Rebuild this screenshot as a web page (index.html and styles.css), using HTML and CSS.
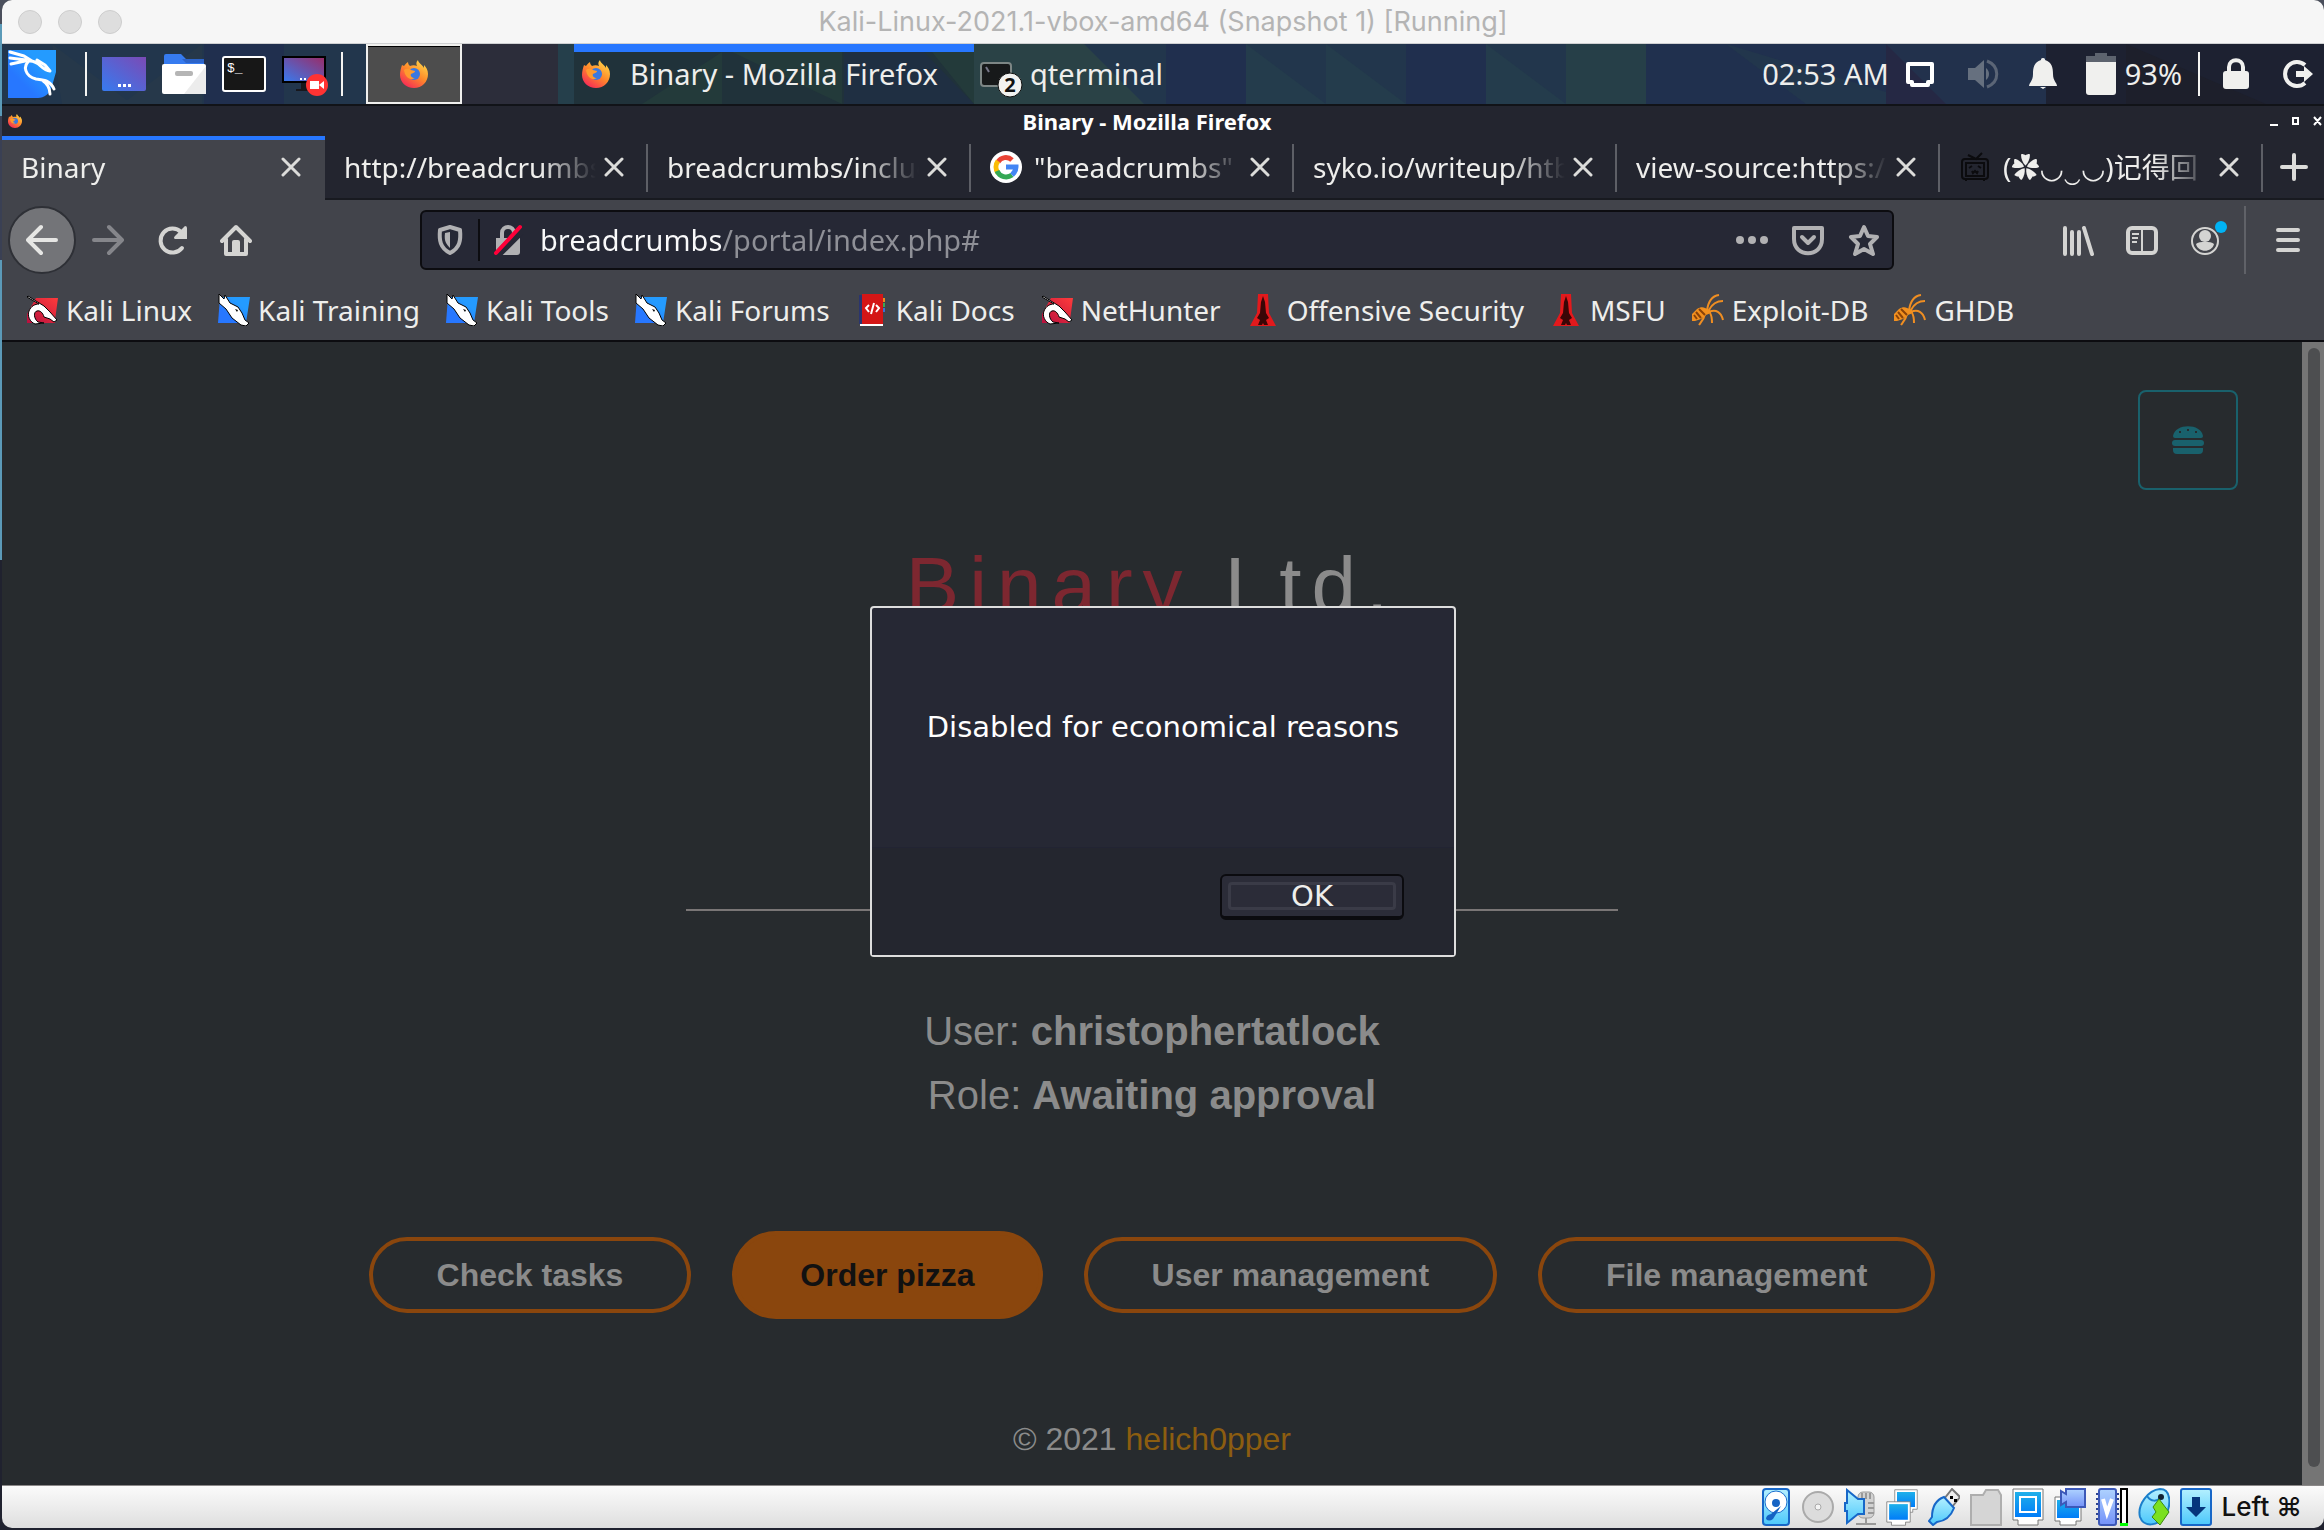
FILE: index.html
```html
<!DOCTYPE html>
<html lang="en">
<head>
<meta charset="utf-8">
<title>Binary - Mozilla Firefox</title>
<link rel="stylesheet" href="styles.css">
</head>
<body>
<svg class="defs" aria-hidden="true">
  <defs>
    <linearGradient id="kaliBlue" x1="0" y1="1" x2="1" y2="0"><stop offset=".3" stop-color="#2777ff"/><stop offset=".7" stop-color="#249bff"/></linearGradient>
    <linearGradient id="kaliRed" x1="0" y1="1" x2="1" y2="0"><stop offset="0" stop-color="#b8103f"/><stop offset="1" stop-color="#ff3b3b"/></linearGradient>
    <linearGradient id="desk" x1="0" y1="1" x2="1" y2="0"><stop offset="0" stop-color="#367bf0"/><stop offset="1" stop-color="#7b4ab5"/></linearGradient>
    <linearGradient id="rec" x1="0" y1="1" x2="1" y2="0"><stop offset="0" stop-color="#367bf0"/><stop offset="1" stop-color="#9c2b66"/></linearGradient>
    <linearGradient id="fox" x1=".9" y1="0" x2=".2" y2="1"><stop offset="0" stop-color="#ffe14d"/><stop offset=".5" stop-color="#ff8a2a"/><stop offset="1" stop-color="#f5235a"/></linearGradient>
    <linearGradient id="sky" x1="0" y1="0" x2="0" y2="1"><stop offset="0" stop-color="#b4f0ff"/><stop offset="1" stop-color="#4cc8fb"/></linearGradient>
    <linearGradient id="azure" x1="0" y1="0" x2="0" y2="1"><stop offset="0" stop-color="#1fb0ea"/><stop offset="1" stop-color="#007cf8"/></linearGradient>
    <linearGradient id="lilac" x1="0" y1="0" x2="0" y2="1"><stop offset="0" stop-color="#aed2ff"/><stop offset="1" stop-color="#7391f8"/></linearGradient>
  </defs>
  <symbol id="firefox" viewBox="0 0 28 28">
    <path fill="url(#fox)" d="M18 0c-2 2-2 4-1 6-2-1-5-1-7 0C9 5 8 4 8 2 6 3 5 5 4 6L2 5C1 8 0 11 0 15c0 7 6 13 14 13s14-6 14-14c0-4-2-7-4-9v3c-1-3-6-5-6-8z"/>
    <circle cx="14" cy="14" r="6" fill="#3a78e0"/>
    <path fill="#ff9a2e" d="M4 10c3-2 6-1 7 0l4 1c0 2-3 2-4 3-1 2 1 4 4 4-4 3-10 0-11-8z"/>
  </symbol>
  <symbol id="kali-red" viewBox="0 0 32 32">
    <path fill="url(#kaliRed)" d="M10 4h22l-3 22 0 3H1V20z"/>
    <path fill="#fff" stroke="#000" d="M2 2l16 10 6 6 7 8-3 2-4-3-6-2c-1-4-4-7-7-6-4 1-3 8 1 11l6 1-9 1C4 28 1 22 3 17c2-5 6-7 10-7L1 3z"/>
  </symbol>
  <symbol id="kali-dragon" viewBox="0 0 32 32">
    <path fill="url(#kaliBlue)" d="M2 3h30l-4 26H0z"/>
    <path fill="#fff" stroke="#000" d="M1 0l5 5 1-4 5 8 8 4 4 6 3 7 4 3-3 3-5-1-9-7-6-9-7-6z"/>
    <path fill="#000" d="M17 15l3 1-1 2z"/>
  </symbol>
  <symbol id="docs" viewBox="0 0 32 32">
    <path fill="#2a356e" d="M3 1h4v29H3z"/><path fill="#f08a1d" d="M26 4h3v4h-3z"/><path fill="#3aa856" d="M26 9h3v4h-3z"/><path fill="#3b6fd8" d="M26 14h3v4h-3z"/>
    <path fill="#d41616" d="M6 0h21v30H6z"/><path fill="#fff" d="M4 30h23v2H4z"/>
    <path fill="none" stroke="#fff" stroke-width="2" d="M13 11l-3 3 3 4M20 11l3 3-3 4M18 9l-3 11"/>
  </symbol>
  <symbol id="offsec" viewBox="0 0 32 32">
    <path fill="#e3191c" d="M11 0h10l1 19 7 13H3l7-13z"/>
    <path fill="#3a0606" d="M16 2l2 6 1 11 3 5-3 2 2 5h-4l-1-2-1 2h-4l2-5-3-2 3-5 1-11z"/>
  </symbol>
  <symbol id="ant" viewBox="0 0 32 32">
    <path fill="none" stroke="#ef8e22" stroke-width="2" d="M15 17c1-9 4-15 12-16M17 16c3-6 7-9 14-9M17 18c7-3 12 0 14 8M18 19c2 3 2 6 2 10M13 20c-1 5-3 7-6 11"/>
    <path fill="#f2901f" d="M0 27V20l5-5c3-2 6-2 8-1l5 2 1 3-5 2-5 4-6 2z"/>
    <path stroke="#8a4208" stroke-width="2" d="M4 18l5 6M7 15l6 6M2 21l3 4"/>
  </symbol>
  <symbol id="close" viewBox="0 0 20 20"><path stroke="currentColor" stroke-width="3" stroke-linecap="round" d="M2 2l16 16M18 2L2 18"/></symbol>
  <symbol id="screen" viewBox="0 0 32 32">
    <path fill="#fff" stroke="#777" d="M1 1h30v26h-6v4H7v-4H1z"/><path fill="url(#azure)" d="M4 4h24v20H4z"/>
  </symbol>
</svg>

<div class="window">
  <header class="mac-bar">
    <div class="lights"><i></i><i></i><i></i></div>
    <span class="mac-title">Kali-Linux-2021.1-vbox-amd64 (Snapshot 1) [Running]</span>
  </header>

  <div class="panel">
    <svg class="panel-art" viewBox="0 0 2322 60" preserveAspectRatio="none" aria-hidden="true">
      <path fill="#22364c" d="M0 0h2322v60H0z"/>
      <path fill="#26384a" d="M50 0l80 60H60zM120 60l80-60v60z"/>
      <path fill="#202f4e" d="M202 0h80v60h-80zM1164 0h80v60h-80zM1404 0h80v60h-80z"/>
      <path fill="#253f4b" d="M556 0h16v60h-16z"/>
      <path fill="#20323a" d="M572 8h400v52H572z"/>
      <path fill="#233a3a" d="M640 60l80-52v52zM730 8h110v52zM930 8h42v52z"/>
      <path fill="#1f2f42" d="M842 8h80l50 52H842z"/>
      <path fill="#2a4246" d="M972 0h110l60 60H972z"/>
      <path fill="#243c4c" d="M1244 0l80 60h-80zM1324 0l80 60h-80zM1484 0l80 60h-80z"/>
      <path fill="#263f48" d="M1564 0h80v60h-80z"/>
      <path fill="#20304e" d="M1644 0h80l80 60h-160zM1724 0h200v60z"/>
      <path fill="#22314c" d="M1884 0h160v60h-160z"/><path fill="#252844" d="M1884 0l60 60h-60z"/>
      <path fill="#1d2131" d="M2044 0h278v60h-278z"/><path fill="#1d1f2b" d="M2124 0l140 60h-140z"/>
    </svg>
    <button class="icon-btn kali-menu" aria-label="Applications"><svg viewBox="0 0 48 48" width="48" height="48"><path fill="url(#kaliBlue)" d="M0 0h48v22l-4 14c-2 8-8 12-14 12H0z"/><g fill="none" stroke="#fff" stroke-width="3" stroke-linecap="round" stroke-linejoin="round"><path d="M2 2l14 4 8 5M2 8l16 2M3 14l14-3M22 10c-8 6-5 16 6 19 8 1 14 1 18 10M34 30c6 4 8 8 8 14M22 11c10 0 11 9 20 10l-5-6-8-5"/></g></svg></button>
    <i class="rule"></i>
    <button class="icon-btn" aria-label="Show desktop"><svg viewBox="0 0 44 44" width="44" height="44"><path fill="url(#desk)" d="M0 5h44v32q0 2-2 2H2q-2 0-2-2z"/><path fill="#fff" d="M16 32h3v3h-3zM21 32h3v3h-3zM26 32h3v3h-3z"/></svg></button>
    <button class="icon-btn" aria-label="Files"><svg viewBox="0 0 44 44" width="44" height="44"><path fill="#367bf0" d="M2 13V4q0-2 2-2h15l5 5h18v8H2z"/><path fill="#2c63c8" d="M20 7h22v4H24z"/><rect y="12" width="44" height="30" rx="2" fill="#fff"/><path fill="#ececec" d="M44 14v28H22z"/><rect x="13" y="19" width="18" height="5" rx="2" fill="#b5b5b5"/></svg></button>
    <button class="icon-btn" aria-label="Terminal"><svg viewBox="0 0 44 44" width="44" height="44"><rect x="1" y="5" width="42" height="34" rx="2" fill="#171717" stroke="#fff" stroke-width="2"/><text x="5" y="20" class="prompt">$_</text></svg></button>
    <button class="icon-btn" aria-label="Screen recorder"><svg viewBox="0 0 46 46" width="46" height="46"><rect x="1" y="6" width="42" height="25" fill="url(#rec)" stroke="#000" stroke-width="2"/><path fill="#17171c" d="M19 32h8v6h6v2H14v-2h5z"/><path fill="#fff" d="M18 27h2v2h-2zM22 27h2v2h-2z"/><circle cx="35" cy="34" r="11" fill="#f33"/><path fill="#fff" d="M28 30h9v8h-9zM37 34l5-4v8z"/></svg></button>
    <i class="rule rule-2"></i>
    <div class="workspaces"><button class="ws ws-on" aria-label="Workspace 1"><svg width="28" height="28"><use href="#firefox"/></svg></button><button class="ws" aria-label="Workspace 2"></button></div>
    <button class="task task-on"><svg width="28" height="28"><use href="#firefox"/></svg><span>Binary - Mozilla Firefox</span></button>
    <button class="task"><svg viewBox="0 0 44 48" width="44" height="48"><rect x="1" y="13" width="30" height="23" rx="3" fill="#17191a" stroke="#7d8685" stroke-width="2"/><path stroke="#778" stroke-width="2" d="M6 17l3 5"/><circle cx="30" cy="35" r="12" fill="#f2f2f0" stroke="#111"/><text x="30" y="42" text-anchor="middle" class="badge">2</text></svg><span>qterminal</span></button>
    <div class="tray">
      <span class="clock">02:53 AM</span>
      <svg class="display" viewBox="0 0 32 32" width="32" height="32"><path fill="none" stroke="#fff" stroke-width="4" stroke-linejoin="round" d="M4 6h24v18h-4v3H8v-3H4z"/></svg>
      <svg viewBox="0 0 32 32" width="32" height="32"><path fill="#66707f" d="M1 10h7l9-8v28l-9-8H1zM19 10c4 3 4 9 0 12z"/><path fill="none" stroke="#5b6576" stroke-width="3" d="M20 3c13 5 13 21 0 26"/></svg>
      <svg viewBox="0 0 32 32" width="32" height="32"><path fill="#f0f0ee" d="M16 0c2 0 2 1 2 2 7 2 8 8 8 14 0 7 4 9 4 12H2c0-3 4-5 4-12 0-6 1-12 8-14 0-1 0-2 2-2zM13 29h6l-3 2z"/></svg>
      <span class="power"><svg viewBox="0 0 32 44" width="32" height="44"><path fill="#5d636e" d="M10 1h12v3h9v8H1V4h9z"/><path fill="#f0f0ee" d="M1 10h30v30q0 3-3 3H4q-3 0-3-3z"/></svg>93%</span>
      <i class="rule"></i>
      <svg viewBox="0 0 32 32" width="32" height="32"><rect x="3" y="13" width="26" height="18" rx="3" fill="#f0f0ee"/><path fill="none" stroke="#f0f0ee" stroke-width="4" d="M9 15V9c0-9 14-9 14 0v6"/></svg>
      <svg viewBox="0 0 32 32" width="32" height="32"><path fill="none" stroke="#f0f0ee" stroke-width="4" d="M23 7A12 12 0 1 0 23 25"/><path fill="#f0f0ee" d="M14 13h8V8l9 8-9 8v-5h-8z"/></svg>
    </div>
  </div>

  <div class="titlebar">
    <svg class="title-fox" width="14" height="14"><use href="#firefox"/></svg>
    <span class="title-text">Binary - Mozilla Firefox</span>
    <svg class="win-ctl" viewBox="0 0 56 14" width="56" height="14"><path stroke="#fff" stroke-width="2" fill="none" d="M2 11h8M25 4h5v6h-5zM46 3l7 8M53 3l-7 8"/></svg>
  </div>

  <nav class="tabs" aria-label="Tabs">
    <div class="tab tab-on"><span class="label">Binary</span><button class="x" aria-label="Close tab"><svg width="20" height="20"><use href="#close"/></svg></button></div>
    <div class="tab"><span class="label">http://breadcrumbs</span><button class="x" aria-label="Close tab"><svg width="20" height="20"><use href="#close"/></svg></button></div>
    <div class="tab"><span class="label">breadcrumbs/includes</span><button class="x" aria-label="Close tab"><svg width="20" height="20"><use href="#close"/></svg></button></div>
    <div class="tab"><svg class="fav" viewBox="0 0 32 32" width="32" height="32"><circle cx="16" cy="16" r="16" fill="#fff"/><g fill="none" stroke-width="5"><path stroke="#ea4335" d="M8 11A9 9 0 0 1 22 9"/><path stroke="#fbbc05" d="M8 10a10 10 0 0 0 0 12"/><path stroke="#34a853" d="M7 20a10 10 0 0 0 15 4"/><path stroke="#4285f4" d="M16 16h10c0 4-2 6-4 8"/></g></svg><span class="label">"breadcrumbs"</span><button class="x" aria-label="Close tab"><svg width="20" height="20"><use href="#close"/></svg></button></div>
    <div class="tab"><span class="label">syko.io/writeup/htb</span><button class="x" aria-label="Close tab"><svg width="20" height="20"><use href="#close"/></svg></button></div>
    <div class="tab"><span class="label">view-source:https:/</span><button class="x" aria-label="Close tab"><svg width="20" height="20"><use href="#close"/></svg></button></div>
    <div class="tab"><svg class="fav" viewBox="0 0 32 32" width="32" height="32"><g fill="none" stroke="#0b0b0e" stroke-width="2"><path d="M9 4l8 4 6-6"/><rect x="3" y="8" width="26" height="20" rx="3"/><rect x="7" y="12" width="18" height="13"/><path d="M10 17l3-2M22 17l-3-2M13 20l1 2 2-2 2 2 1-2M7 28v2M25 28v2"/></g></svg><span class="label">(✿◡‿◡)记得回</span><button class="x" aria-label="Close tab"><svg width="20" height="20"><use href="#close"/></svg></button></div>
    <button class="new-tab" aria-label="New tab"><svg viewBox="0 0 28 28" width="28" height="28"><path stroke="currentColor" stroke-width="4" stroke-linecap="round" d="M14 2v24M2 14h24"/></svg></button>
  </nav>

  <div class="toolbar">
    <div class="nav-left">
      <button class="back" aria-label="Back"><svg viewBox="0 0 32 32" width="32" height="32"><path class="ln" d="M30 16H3M15 3L2 16l13 13"/></svg></button>
      <button class="icon-btn dim" aria-label="Forward"><svg viewBox="0 0 32 32" width="32" height="32"><path class="ln" d="M2 16h27M17 3l13 13-13 13"/></svg></button>
      <button class="icon-btn" aria-label="Reload"><svg viewBox="0 0 32 32" width="32" height="32"><path class="ln" d="M26 24A12 12 0 1 1 25 8"/><path fill="currentColor" d="M29 2q2 0 2 2v11H19q-2-1 0-3z"/></svg></button>
      <button class="icon-btn" aria-label="Home"><svg viewBox="0 0 32 32" width="32" height="32"><path class="ln" d="M2 17L16 3l14 14M6 15v15h20V15"/><path fill="currentColor" d="M12 30V18q0-2 2-2h4q2 0 2 2v12z"/></svg></button>
    </div>
    <form class="urlbar">
      <svg viewBox="0 0 32 32" width="32" height="32"><path fill="none" stroke="#b1b1b3" stroke-width="4" stroke-linejoin="round" d="M16 3l10 3c1 10 0 18-10 23C6 24 5 16 6 6z"/><path fill="#b1b1b3" d="M16 8v16c-4-4-6-7-5-15z"/></svg>
      <i class="url-rule"></i>
      <svg viewBox="0 0 32 32" width="32" height="32"><path fill="#b1b1b3" d="M4 14h24v14q0 3-3 3H7q-3 0-3-3z"/><path fill="none" stroke="#b1b1b3" stroke-width="4" d="M10 15V9c0-8 12-8 12 0v6"/><path stroke="#262835" stroke-width="8" d="M5 31L31 5"/><path stroke="#ff0039" stroke-width="4" stroke-linecap="round" d="M4 29L28 3"/></svg>
      <input class="url" type="text" aria-label="Address" value="breadcrumbs/portal/index.php#">
      <svg viewBox="0 0 32 32" width="32" height="32" fill="#b1b1b3"><circle cx="4" cy="16" r="4"/><circle cx="16" cy="16" r="4"/><circle cx="28" cy="16" r="4"/></svg>
      <svg viewBox="0 0 32 32" width="32" height="32"><path fill="none" stroke="#b1b1b3" stroke-width="4" stroke-linejoin="round" d="M2 4h28v11c0 19-28 19-28 0z"/><path fill="none" stroke="#b1b1b3" stroke-width="4" stroke-linecap="round" stroke-linejoin="round" d="M10 13l6 6 6-6"/></svg>
      <svg viewBox="0 0 32 32" width="32" height="32"><path fill="none" stroke="#b1b1b3" stroke-width="4" stroke-linejoin="round" d="M16 3l4 9 9 1-7 7 3 10-9-5-9 5 3-10-7-7 9-1z"/></svg>
    </form>
    <div class="nav-right">
      <button class="icon-btn" aria-label="Library"><svg viewBox="0 0 32 32" width="32" height="32"><path class="ln" d="M3 4v26M10 8v22M17 8v22M22 4l8 26"/></svg></button>
      <button class="icon-btn" aria-label="Sidebar"><svg viewBox="0 0 32 32" width="32" height="32"><rect class="ln" x="2" y="4" width="28" height="25" rx="4"/><path fill="none" stroke="currentColor" stroke-width="2" d="M16 4v25M6 10h7M6 14h6M6 18h5"/></svg></button>
      <button class="icon-btn account" aria-label="Account"><svg viewBox="0 0 44 40" width="44" height="40"><circle cx="18" cy="21" r="13" fill="none" stroke="currentColor" stroke-width="2"/><circle cx="18" cy="16" r="6" fill="currentColor"/><path fill="currentColor" d="M9 24c3-3 15-3 18 0-2 9-16 9-18 0z"/><circle cx="34" cy="7" r="6" fill="#00b3f4"/></svg></button>
      <i class="menu-rule"></i>
      <button class="icon-btn" aria-label="Menu"><svg viewBox="0 0 32 32" width="32" height="32"><path class="ln" d="M6 6h20M6 16h20M6 26h20"/></svg></button>
    </div>
  </div>

  <nav class="bookmarks" aria-label="Bookmarks">
    <a href="#"><svg width="32" height="32"><use href="#kali-red"/></svg>Kali Linux</a>
    <a href="#"><svg width="32" height="32"><use href="#kali-dragon"/></svg>Kali Training</a>
    <a href="#"><svg width="32" height="32"><use href="#kali-dragon"/></svg>Kali Tools</a>
    <a href="#"><svg width="32" height="32"><use href="#kali-dragon"/></svg>Kali Forums</a>
    <a href="#"><svg width="32" height="32"><use href="#docs"/></svg>Kali Docs</a>
    <a href="#"><svg width="32" height="32"><use href="#kali-red"/></svg>NetHunter</a>
    <a href="#"><svg width="32" height="32"><use href="#offsec"/></svg>Offensive Security</a>
    <a href="#"><svg width="32" height="32"><use href="#offsec"/></svg>MSFU</a>
    <a href="#"><svg width="32" height="32"><use href="#ant"/></svg>Exploit-DB</a>
    <a href="#"><svg width="32" height="32"><use href="#ant"/></svg>GHDB</a>
  </nav>

  <div class="viewport">
    <main class="page">
      <button class="burger" aria-label="Menu"><svg viewBox="0 0 32 28" width="32" height="28"><path fill="currentColor" d="M1 10C3-3 29-3 31 10q0 2-2 2H3q-2 0-2-2z"/><rect y="14" width="32" height="6" rx="3" fill="currentColor"/><path fill="currentColor" d="M1 22h30v2q0 4-4 4H5q-4 0-4-4z"/><path fill="#272b2e" d="M7 5h2v2H7zM15 3h2v2h-2zM23 5h2v2h-2z"/></svg></button>
      <h1><span>Binary</span> Ltd.</h1>
      <hr>
      <p class="who">User: <b>christophertatlock</b></p>
      <p class="who">Role: <b>Awaiting approval</b></p>
      <div class="actions">
        <button class="pill">Check tasks</button>
        <button class="pill pill-on">Order pizza</button>
        <button class="pill">User management</button>
        <button class="pill">File management</button>
      </div>
      <footer>© 2021 <a href="#">helich0pper</a></footer>
    </main>
    <div class="scrollbar"><i></i></div>
    <div class="dialog" role="alertdialog" aria-modal="true" aria-labelledby="msg">
      <p id="msg">Disabled for economical reasons</p>
      <div class="dialog-foot"><button class="ok"><span>OK</span></button></div>
    </div>
  </div>

  <footer class="status">
    <svg viewBox="0 0 32 38" width="32" height="38"><rect x="3" y="1" width="26" height="36" rx="3" fill="url(#sky)" stroke="#1767c8" stroke-width="2"/><circle cx="16" cy="14" r="11" fill="#fff" stroke="#1a6fcf"/><circle cx="16" cy="15" r="4" fill="#1563c4"/><path fill="#1563c4" d="M21 18l-8 13q-4 3-7 0 0-4 5-5z"/></svg>
    <svg viewBox="0 0 32 38" width="32" height="38"><circle cx="16" cy="19" r="15" fill="#dcdcdc" stroke="#aaa" stroke-width="2"/><circle cx="16" cy="19" r="3" fill="#f4f4f4" stroke="#aaa"/></svg>
    <svg viewBox="0 0 32 38" width="32" height="38"><rect x="14" y="4" width="16" height="26" rx="5" fill="#d2d2d2" stroke="#9b9b9b"/><path stroke="#999" stroke-width="2" d="M18 5v6M22 5v6M26 5v6M24 15h6M24 20h6M24 25h6M22 30v5M12 36h20"/><path fill="url(#sky)" stroke="#1767c8" stroke-width="2" d="M1 15h2V2l11 9h6v15h-6L3 35V23H1z"/></svg>
    <svg viewBox="0 0 32 38" width="32" height="38"><svg x="8" y="1" width="24" height="24"><use href="#screen"/></svg><svg x="0" y="13" width="25" height="25"><use href="#screen"/></svg></svg>
    <svg viewBox="0 0 32 38" width="32" height="38"><path fill="#eee" stroke="#777" stroke-width="2" d="M16 11l8-10 8 8-8 10z"/><path d="M22 8h3v3h-3zM26 11h3v3h-3z"/><path fill="url(#sky)" stroke="#1767c8" stroke-width="2" d="M16 9l10 11c-3 8-8 13-17 14l-4 3-4-4 3-4C4 19 8 12 16 9z"/></svg>
    <svg viewBox="0 0 32 38" width="32" height="38"><path fill="#d5d5d5" stroke="#aeaeae" stroke-width="2" d="M1 7h12l3-5h12l3 5v30H1z"/></svg>
    <svg viewBox="0 0 32 38" width="32" height="38"><path fill="#fff" stroke="#777" d="M1 1h30v31h-5v5H6v-5H1z"/><path fill="url(#azure)" d="M3 4h26v25H3z"/><path fill="none" stroke="#fff" stroke-width="2" d="M8 9h16v15H8z"/></svg>
    <svg viewBox="0 0 32 38" width="32" height="38"><path fill="#fff" stroke="#777" d="M1 9h26v24h-5v4H6v-4H1z"/><path fill="url(#azure)" d="M3 12h22v18H3z"/><path fill="url(#lilac)" stroke="#3c58b8" stroke-width="2" d="M7 3l5 3V1h19v18H12v-5l-5 3z"/></svg>
    <svg viewBox="0 0 32 38" width="32" height="38"><path stroke="#2e4490" stroke-width="2" stroke-dasharray="2 3" d="M1 5v30M22 5v30"/><rect x="3" y="1" width="17" height="36" rx="2" fill="url(#lilac)" stroke="#3c58b8" stroke-width="2"/><path fill="none" stroke="#fff" stroke-width="4" d="M7 11l4 14 5-14"/><path fill="#fff" stroke="#000" stroke-width="2" d="M25 1h6v35h-6z"/><path fill="#0f0" d="M24 35h8v3h-8z"/></svg>
    <svg viewBox="0 0 32 38" width="32" height="38"><path fill="url(#sky)" stroke="#1b7fcb" stroke-width="2" d="M2 29c-3-12 8-27 20-28 12 0 11 18 5 27-7 10-21 12-25 1z"/><path fill="none" stroke="#1b7fcb" stroke-width="2" d="M9 8c4 6 10 6 14 1"/><circle cx="23" cy="9" r="3" fill="#123"/><path fill="#7be020" stroke="#3c8a10" d="M21 11l10 13-9 13-8-8 4-5-3-5z"/></svg>
    <svg viewBox="0 0 32 38" width="32" height="38"><rect x="1" y="1" width="30" height="36" rx="2" fill="url(#sky)" stroke="#1767c8" stroke-width="2"/><path fill="#06367c" d="M12 9h8v10h6L16 29 6 19h6z"/></svg>
    <span class="host-key">Left ⌘</span>
  </footer>
</div>
</body>
</html>
```
FILE: styles.css
```css
* { box-sizing: border-box; }
html { height: 100%; }
body {
  margin: 0;
  min-height: 100%;
  display: flex;
  padding: 0 0 2px 2px;
  background: linear-gradient(#4a4f5c 0 24px, #5b9ab8 24px 116px, #3a4054 116px 260px, #5b9ab8 260px 560px, #20222f 560px);
  font-family: "Noto Sans", "Noto Sans CJK SC", "DejaVu Sans", sans-serif;
  font-size: 29px;
  line-height: 40px;
  color: #eeeeec;
}
button { margin: 0; padding: 0; border: 0; background: none; font: inherit; color: inherit; }
svg { display: block; flex: none; }
a { color: inherit; text-decoration: none; }
p, h1 { margin: 0; }
.defs { position: absolute; width: 0; height: 0; }
.ln { fill: none; stroke: currentColor; stroke-width: 4; stroke-linecap: round; stroke-linejoin: round; }

.window {
  flex: 1;
  min-width: 0;
  display: flex;
  flex-direction: column;
  border-radius: 10px;
  overflow: hidden;
  background: #23252f;
}

/* host window title */
.mac-bar {
  display: grid;
  grid-template-columns: 1fr auto 1fr;
  align-items: center;
  height: 44px;
  background: #f6f6f6;
  border-bottom: 1px solid #cfd0d2;
  color: #b4b4b4;
}
.lights { display: flex; gap: 16px; padding-left: 16px; }
.lights i { width: 24px; height: 24px; border-radius: 50%; background: #dedede; border: 1px solid #cdcdcd; }
.mac-title { font: 27px/32px Inter, sans-serif; }

/* desktop panel */
.panel {
  position: relative;
  display: flex;
  align-items: center;
  height: 60px;
  padding-left: 6px;
}
.panel > * { position: relative; flex: none; }
.panel > .panel-art { position: absolute; inset: 0; width: 100%; height: 100%; }
.rule { width: 2px; height: 44px; background: #f4f4f2; }
.kali-menu { margin-right: 29px; }
.panel > .icon-btn + .icon-btn { margin-left: 16px; }
.rule + .icon-btn { margin-left: 15px; }
.rule-2 { margin-left: 13px; }
.prompt { font: 13px "Liberation Mono", monospace; fill: #fff; }
.badge { font: 700 20px "Noto Sans", sans-serif; fill: #111; }
.workspaces { display: flex; margin: 0 16px 0 23px; height: 60px; }
.ws { display: flex; align-items: center; justify-content: center; width: 96px; background: #2c2d3a; }
.ws-on { background: #4d4d4d; border: 2px solid #f0f0ee; box-shadow: inset 0 1px 0 #000; }
.task { display: flex; align-items: center; gap: 20px; height: 60px; }
.task-on { width: 400px; padding-left: 8px; border-top: 8px solid #2777ff; }
.task-on > * { margin-top: -8px; }
.task:not(.task-on) { padding-left: 6px; gap: 6px; }
.tray { display: flex; align-items: center; gap: 28px; margin-left: auto; padding-right: 10px; }
.display { margin: 0 3px 0 -13px; }
.power { display: flex; align-items: center; gap: 8px; margin: 0 -12px 0 -4px; }
.tray .rule { margin-right: -8px; }
.tray svg:last-child { margin-left: 2px; }

/* browser window */
.titlebar {
  display: grid;
  grid-template-columns: 1fr auto 1fr;
  align-items: center;
  height: 32px;
  border-top: 2px solid #111318;
  font-size: 22px;
  line-height: 28px;
  font-weight: 700;
  color: #fff;
}
.title-fox { margin-left: 6px; }
.title-text { margin-right: 32px; }
.win-ctl { justify-self: end; }
.tabs { display: flex; height: 64px; border-bottom: 2px solid #181a20; font-size: 28px; }
.tab {
  position: relative;
  flex: 1;
  min-width: 0;
  display: flex;
  align-items: center;
  gap: 12px;
  padding: 0 24px 0 19px;
}
.tab:not(.tab-on)::after { content: ""; position: absolute; right: 0; top: 8px; height: 48px; width: 2px; background: #5d5f66; }
.tab-on { background: #42444b; box-shadow: inset 0 4px 0 #2777ff, 0 2px 0 #42444b; }
.label {
  flex: 1;
  min-width: 0;
  overflow: hidden;
  white-space: nowrap;
  -webkit-mask-image: linear-gradient(to left, transparent, #000 56px);
  mask-image: linear-gradient(to left, transparent, #000 56px);
}
.label { margin-right: -4px; }
.x, .new-tab { color: #dcdcda; }
.new-tab { display: flex; align-items: center; justify-content: center; width: 61px; }

.toolbar { display: flex; align-items: center; height: 80px; background: #42444b; color: #d4d4d2; }
.nav-left { width: 18%; display: flex; align-items: center; gap: 32px; padding-left: 6px; }
.back {
  display: flex; align-items: center; justify-content: center;
  width: 68px; height: 68px;
  border-radius: 50%;
  border: 2px solid #2e3036;
  background: #737478;
  color: #e6e6e4;
}
.back + .icon-btn { margin-left: -16px; }
.dim { color: #85868b; }
.urlbar {
  flex: 1;
  min-width: 0;
  display: flex;
  align-items: center;
  gap: 24px;
  height: 60px;
  padding: 0 12px;
  background: #262835;
  border: 2px solid #0c0c10;
  border-radius: 6px;
}
.url-rule { width: 2px; height: 42px; margin: 0 -12px; background: #0c0c10; }
.url {
  flex: 1;
  min-width: 0;
  margin-left: -8px;
  padding: 0;
  border: 0;
  outline: 0;
  font: inherit;
  background: linear-gradient(to right, #f9f9fa 181px, #8f9097 181px);
  -webkit-background-clip: text;
  background-clip: text;
  color: transparent;
}
.nav-right { width: 18.5%; display: flex; align-items: center; justify-content: flex-end; gap: 32px; padding-right: 20px; }
.menu-rule { width: 2px; height: 68px; margin: 0 -6px 0 -16px; background: #606268; }
.account { margin: 0 -3px 0 -3px; }

.bookmarks {
  display: flex;
  align-items: center;
  gap: 26px;
  height: 62px;
  padding: 0 24px;
  background: #42444b;
  border-bottom: 2px solid #0c0c10;
  font-size: 28px;
}
.bookmarks a { display: flex; align-items: center; gap: 8px; white-space: nowrap; }

/* web page */
.viewport { position: relative; flex: 1; display: flex; background: #272b2e; }
.page {
  position: relative;
  flex: 1;
  display: flex;
  flex-direction: column;
  align-items: center;
  padding: 196px 0 22px;
  font: 32px/48px "Liberation Sans", Arial, sans-serif;
  color: #8b8b8b;
}
.burger {
  position: absolute;
  top: 48px;
  right: 64px;
  display: flex; align-items: center; justify-content: center;
  width: 100px; height: 100px;
  border: 2px solid #19616c;
  border-radius: 8px;
  color: #19616c;
}
h1 { font-size: 80px; line-height: 96px; font-weight: 400; letter-spacing: 10px; }
h1 span { color: #7d2730; }
hr { width: 932px; max-width: 90%; height: 2px; margin: 275px 0 88px; border: 0; background: #7a7676; }
.who { font-size: 40px; line-height: 64px; }
.actions { display: flex; align-items: center; gap: 41px; margin: 104px 0 96px; }
.pill { height: 76px; padding: 0 64px; border: 4px solid #8a460d; border-radius: 44px; font-weight: 700; }
.pill-on { height: 88px; background: #8a460d; color: #111; }
.page footer a { color: #8c5d10; }
.scrollbar { width: 22px; padding: 6px 4px 18px 6px; display: flex; background: #757575; }
.scrollbar i { flex: 1; border-radius: 6px; background: #4d4e50; }

.dialog {
  position: absolute;
  top: 264px;
  left: 50%;
  transform: translateX(-50%);
  width: 586px;
  border: 2px solid #dddddd;
  border-radius: 4px;
  background: #262834;
  font-family: "DejaVu Sans", sans-serif;
  color: #fff;
}
.dialog p { padding: 99px 0 100px; text-align: center; }
.dialog-foot { display: flex; justify-content: flex-end; padding: 26px 50px 35px; background: #24262f; border-top: 1px solid #222433; }
.ok {
  width: 184px;
  padding: 6px;
  border: 2px solid #0b0b0f;
  border-bottom-width: 4px;
  border-radius: 6px;
  background: #2b2c38;
}
.ok span { display: block; height: 28px; line-height: 22px; border: 3px solid #3a3b47; border-radius: 4px; color: #eeeeec; }

/* host status bar */
.status {
  display: flex;
  align-items: center;
  justify-content: flex-end;
  gap: 10px;
  height: 43px;
  padding-right: 22px;
  border-top: 1px solid #8b8888;
  background: linear-gradient(#fbfbfb, #dedede);
  color: #111;
}
.host-key { font: 500 26px/32px Inter, "DejaVu Sans", sans-serif; }
```
